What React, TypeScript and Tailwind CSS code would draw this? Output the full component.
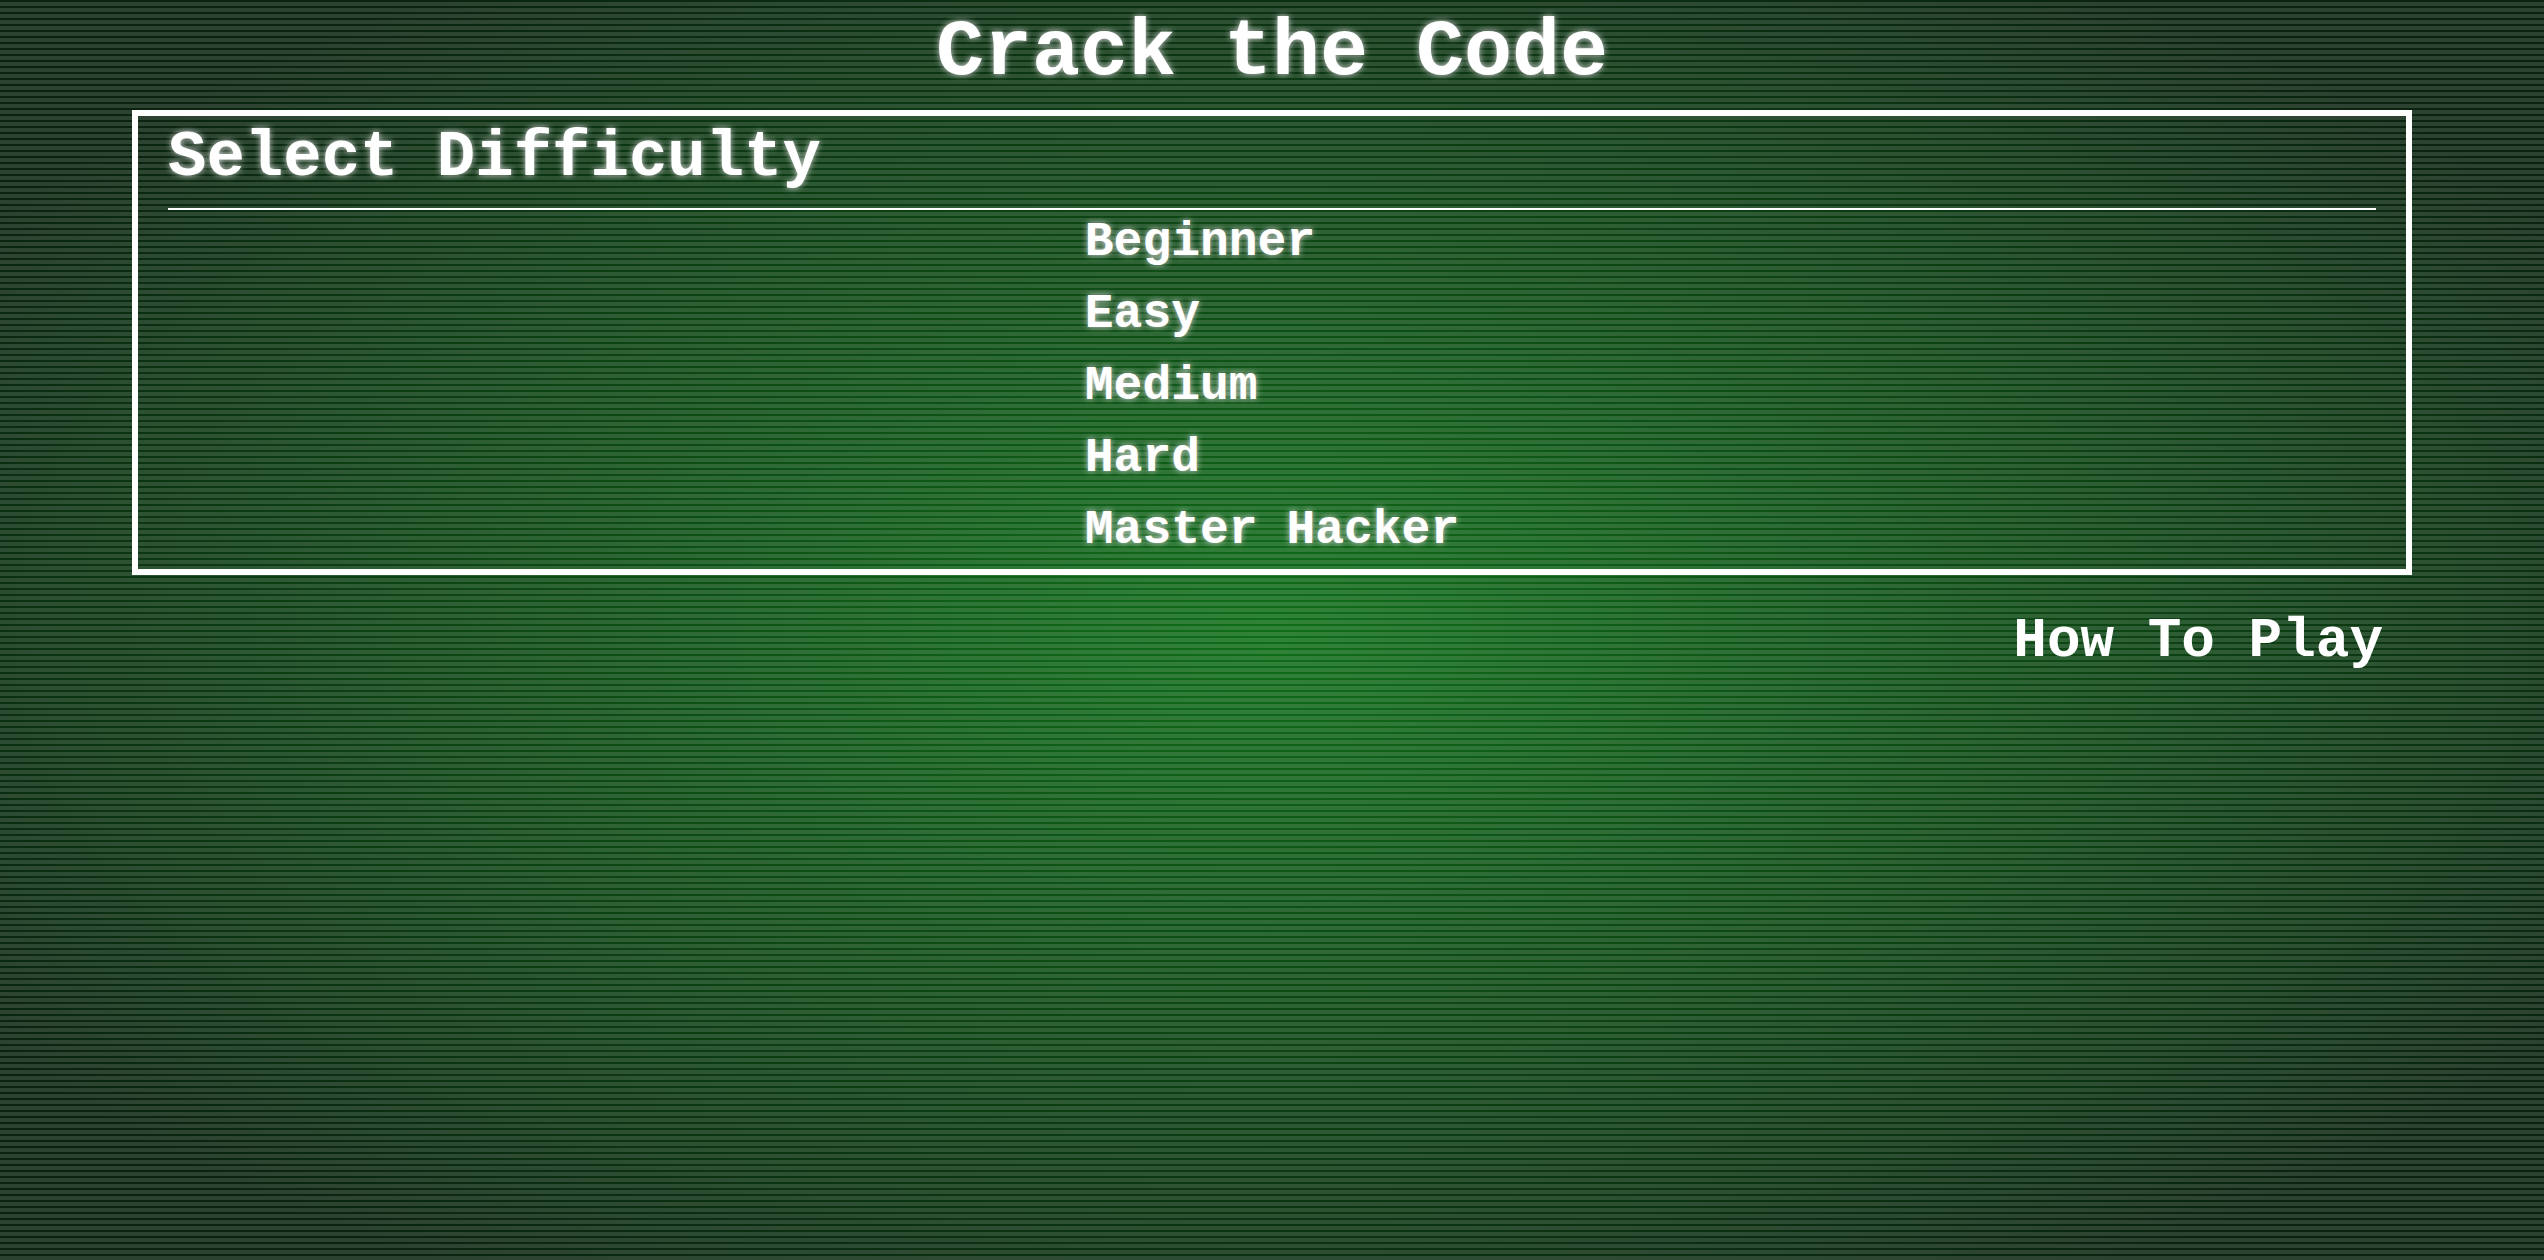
import React from "react";

const levels = ["Beginner", "Easy", "Medium", "Hard", "Master Hacker"];

export default function App() {
  return (
    <div className="relative min-h-screen w-full overflow-hidden bg-[radial-gradient(ellipse_at_center,rgb(15,110,25)_0%,rgb(10,35,15)_85%)] font-['Liberation_Mono','Courier_New',monospace] font-bold text-white">
      <div className="pointer-events-none absolute inset-0 bg-[repeating-linear-gradient(180deg,transparent_0px,transparent_2px,rgba(255,255,255,0.14)_2px,rgba(255,255,255,0.14)_6px)]" />
      <div className="relative [text-shadow:0_0_6px_#d0d0d0]">
        <h1 className="pt-[7px] text-center text-[80px] leading-[91px]">Crack the Code</h1>
        <div className="mx-[132px] mt-[12px] border-[6px] border-white px-[30px] pb-[7px]">
          <h2 className="pt-[6px] text-[64px] leading-[72px]">Select Difficulty</h2>
          <div className="mt-[14px] h-[2px] bg-white" />
          <ul className="mx-auto flex w-fit flex-col gap-[8px]">
            {levels.map((l) => (
              <li key={l} className="cursor-pointer text-[48px] leading-[64px]">
                {l}
              </li>
            ))}
          </ul>
        </div>
        <div className="mt-[34px] flex justify-end pr-[161px]">
          <button className="cursor-pointer text-[56px] leading-[64px] font-bold">How To Play</button>
        </div>
      </div>
    </div>
  );
}
